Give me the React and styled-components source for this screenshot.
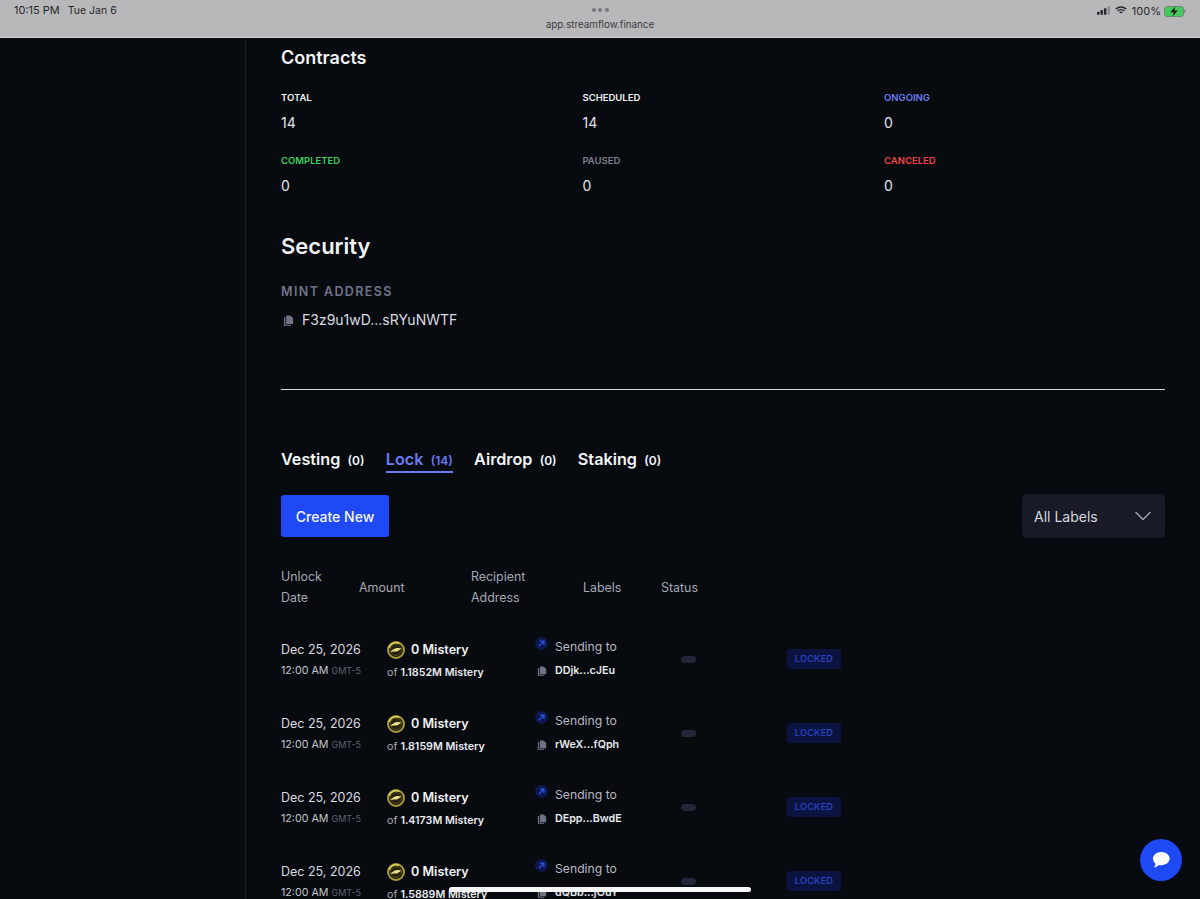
import React from 'react';
import styled, { createGlobalStyle } from 'styled-components';
import { ChevronDown } from 'lucide-react';

const STATS = [
  { label: 'Total', value: 14, color: '#f2f3f5' },
  { label: 'Scheduled', value: 14, color: '#f2f3f5' },
  { label: 'Ongoing', value: 0, color: '#6b7cf0' },
  { label: 'Completed', value: 0, color: '#3fd15f' },
  { label: 'Paused', value: 0, color: '#7d8291' },
  { label: 'Canceled', value: 0, color: '#ef4444' },
];

const TABS = [
  { name: 'Vesting', count: 0 },
  { name: 'Lock', count: 14, active: true },
  { name: 'Airdrop', count: 0 },
  { name: 'Staking', count: 0 },
];

const ROWS = [
  { total: '1.1852M', address: 'DDjk...cJEu' },
  { total: '1.8159M', address: 'rWeX...fQph' },
  { total: '1.4173M', address: 'DEpp...BwdE' },
  { total: '1.5889M', address: 'dQBb...jOuY' },
];

const CopyIcon = ({ size = 11 }) => (
  <svg width={size} height={size} viewBox="0 0 12 12">
    <path d="M3.500 0.500h4.200L11 3.400v6.400H3.500z" fill="#6f7484" />
    <path d="M1 2.400h1.600v8.200h6v1H1z" fill="#6f7484" />
  </svg>
);

const Coin = () => (
  <svg width="18" height="18" viewBox="0 0 18 18">
    <circle cx="9" cy="9" r="8" fill="#1b1a0c" stroke="#a99b37" strokeWidth="2" />
    <path d="M2.200 7a7 7 0 0 1 10-4.400" fill="none" stroke="#e3d55c" strokeWidth="1.400" />
    <circle cx="9" cy="9" r="5.600" fill="#26240f" stroke="#5c5622" strokeWidth="0.800" />
    <path d="M3.500 11C5 9 7 7.400 10 7c1.500-.2 3 0 4.500.5-1.500 1-2.500 2-4 2.800-1.500.5-3 0-4 .2s-2 .7-3 .5z" fill="#e9dd8a" />
  </svg>
);

const ArrowBadge = () => (
  <Badge>
    <svg width="7" height="7" viewBox="0 0 8 8" fill="none" stroke="#2f56f5" strokeWidth="1.400">
      <path d="M1 7L6.500 1.500M2.400 1.200h4.400v4.400" />
    </svg>
  </Badge>
);

const StatusIcons = () => (
  <Indicators>
    <svg width="13" height="9" viewBox="0 0 15 10" fill="#26272b">
      <rect x="0" y="6.500" width="2.800" height="3.500" rx="0.600" />
      <rect x="4" y="4.500" width="2.800" height="5.500" rx="0.600" />
      <rect x="8" y="2.300" width="2.800" height="7.700" rx="0.600" />
      <rect x="12" y="0" width="2.800" height="10" rx="0.600" opacity="0.300" />
    </svg>
    <svg width="12" height="9" viewBox="0 0 14 10" fill="none" stroke="#26272b" strokeWidth="1.700">
      <path d="M1 3.400a8.600 8.600 0 0 1 12 0" />
      <path d="M3.200 5.600a5.400 5.400 0 0 1 7.600 0" />
      <path d="M5.400 7.700a2.400 2.400 0 0 1 3.200 0" />
    </svg>
    <Percent>100%</Percent>
    <svg width="22" height="11" viewBox="0 0 22 11">
      <rect x="0.500" y="0.500" width="19" height="10" rx="2.600" fill="#43c95c" stroke="#6f8a72" />
      <rect x="20.300" y="3.600" width="1.200" height="3.600" rx="0.600" fill="#77807a" />
      <path d="M11.300 0.600L6.300 6.200h3.400l-1.200 4.200 5.200-5.800h-3.400z" fill="#1a1c1b" />
    </svg>
  </Indicators>
);

const App = () => (
  <Page>
    <GlobalStyle />

    <StatusBar>
      <Clock>
        <span>10:15 PM</span>
        <DayText>Tue Jan 6</DayText>
      </Clock>
      <UrlBlock>
        <Dots>
          <i />
          <i />
          <i />
        </Dots>
        <Url>app.streamflow.finance</Url>
      </UrlBlock>
      <StatusIcons />
    </StatusBar>

    <Layout>
      <Sidebar />

      <Main>
        <ContractsTitle>Contracts</ContractsTitle>
        <StatsGrid>
          {STATS.map((stat) => (
            <div key={stat.label}>
              <StatLabel $color={stat.color}>{stat.label}</StatLabel>
              <StatValue>{stat.value}</StatValue>
            </div>
          ))}
        </StatsGrid>

        <SecurityTitle>Security</SecurityTitle>
        <MintLabel>Mint Address</MintLabel>
        <MintRow>
          <CopyIcon />
          <span>F3z9u1wD...sRYuNWTF</span>
        </MintRow>

        <Divider />

        <Tabs>
          {TABS.map((tab) => (
            <Tab key={tab.name} $active={tab.active}>
              {tab.name}
              <TabCount>({tab.count})</TabCount>
            </Tab>
          ))}
        </Tabs>

        <Toolbar>
          <CreateButton>Create New</CreateButton>
          <LabelSelect>
            All Labels
            <ChevronDown size={28} strokeWidth={1.300} color="#9ba0ad" />
          </LabelSelect>
        </Toolbar>

        <HeaderRow>
          <span>Unlock<br />Date</span>
          <span>Amount</span>
          <span>Recipient<br />Address</span>
          <span>Labels</span>
          <span>Status</span>
        </HeaderRow>

        <RowList>
          {ROWS.map((row) => (
            <Row key={row.address}>
              <DateCell>
                <DateLine>Dec 25, 2026</DateLine>
                <TimeLine>12:00 AM <small>GMT-5</small></TimeLine>
              </DateCell>
              <AmountCell>
                <AmountLine><Coin />0 Mistery</AmountLine>
                <OfLine>of <b>{row.total} Mistery</b></OfLine>
              </AmountCell>
              <RecipientCell>
                <SendingLine><ArrowBadge />Sending to</SendingLine>
                <AddressLine><CopyIcon size={10} /><b>{row.address}</b></AddressLine>
              </RecipientCell>
              <div><LabelPill /></div>
              <LockedTag>Locked</LockedTag>
            </Row>
          ))}
        </RowList>
      </Main>
    </Layout>

    <ChatButton>
      <svg width="20" height="18" viewBox="0 0 20 18">
        <path d="M10.400 1C15 1 18.600 3.900 18.600 7.600s-3.600 6.600-8.200 6.600c-.9 0-1.800-.1-2.600-.3-1.200 1.300-3 2.300-5 2.500 1-1 1.600-2.200 1.700-3.700C2.900 11.500 2 9.700 2 7.600 2 3.900 5.800 1 10.400 1z" fill="#fff" />
      </svg>
    </ChatButton>
    <HomeIndicator />
  </Page>
);

const GlobalStyle = createGlobalStyle`
  html, body {
    margin: 0;
    height: 100%;
    background: #070a0f;
  }
  body {
    font-family: Inter, "Liberation Sans", sans-serif;
    color: #f2f3f5;
    overflow: hidden;
  }
`;

const Page = styled.div`
  position: relative;
  width: 1200px;
  height: 899px;
  overflow: hidden;
  display: flex;
  flex-direction: column;
  background: #070a0f;
`;

const StatusBar = styled.header`
  flex: 0 0 38px;
  box-sizing: border-box;
  height: 38px;
  display: grid;
  grid-template-columns: 1fr auto 1fr;
  padding: 0 14px;
  background: #b8b8ba;
  border-bottom: 1px solid #d0d0d1;
  color: #26272b;
  font-size: 11px;
`;

const Clock = styled.div`
  display: flex;
  gap: 8px;
  padding-top: 4px;
  line-height: 13px;
`;

const DayText = styled.span`
  font-size: 10.500px;
`;

const UrlBlock = styled.div`
  display: flex;
  flex-direction: column;
  align-items: center;
  padding-top: 8px;
`;

const Dots = styled.div`
  display: flex;
  gap: 2.500px;
  i {
    width: 4px;
    height: 4px;
    border-radius: 50%;
    background: #77787c;
  }
`;

const Url = styled.div`
  margin-top: 6px;
  font-size: 9.800px;
  line-height: 14px;
  color: #3a3b3f;
`;

const Indicators = styled.div`
  display: flex;
  justify-content: flex-end;
  align-items: flex-start;
  gap: 5px;
  padding-top: 5px;
  line-height: 12px;
  font-size: 11px;
  svg { margin-top: 1px; }
`;

const Percent = styled.span`
  margin-right: -2px;
`;

const Layout = styled.div`
  flex: 1;
  display: flex;
  min-height: 0;
`;

const Sidebar = styled.aside`
  flex: 0 0 246px;
  box-sizing: border-box;
  border-right: 1px solid #1b1e25;
`;

const Main = styled.main`
  flex: 1;
  min-width: 0;
  padding: 0 35px;
`;

const ContractsTitle = styled.h2`
  margin: 8px 0 0;
  font-size: 18px;
  line-height: 23px;
  font-weight: 600;
`;

const StatsGrid = styled.div`
  display: grid;
  grid-template-columns: repeat(3, 281px);
  column-gap: 20.500px;
  row-gap: 23px;
  margin-top: 23px;
`;

const StatLabel = styled.div`
  font-size: 9.500px;
  line-height: 12px;
  font-weight: 600;
  text-transform: uppercase;
  color: ${(p) => p.$color};
`;

const StatValue = styled.div`
  margin-top: 10px;
  font-size: 14px;
  line-height: 18px;
  color: #e3e5ea;
`;

const SecurityTitle = styled.h2`
  margin: 37px 0 0;
  font-size: 22px;
  line-height: 28px;
  font-weight: 600;
`;

const MintLabel = styled.div`
  margin-top: 24px;
  font-size: 12.500px;
  line-height: 16px;
  font-weight: 600;
  letter-spacing: 1.400px;
  text-transform: uppercase;
  color: #70758a;
`;

const MintRow = styled.div`
  display: flex;
  align-items: center;
  gap: 8px;
  margin-top: 11px;
  padding-left: 2px;
  font-size: 14px;
  line-height: 18px;
  color: #d9dbe1;
`;

const Divider = styled.hr`
  margin: 60px 0 0;
  border: 0;
  height: 1px;
  background: #d6d7da;
`;

const Tabs = styled.nav`
  display: flex;
  gap: 21.300px;
  margin-top: 59px;
`;

const Tab = styled.div`
  display: flex;
  align-items: baseline;
  gap: 7.300px;
  font-size: 16.200px;
  line-height: 21px;
  font-weight: 600;
  color: ${(p) => (p.$active ? '#6b7cf0' : '#f4f5f7')};
  border-bottom: 2px solid ${(p) => (p.$active ? '#6b7cf0' : 'transparent')};
`;

const TabCount = styled.span`
  font-size: 12px;
  font-weight: 600;
`;

const Toolbar = styled.div`
  display: flex;
  justify-content: space-between;
  align-items: center;
  margin-top: 21px;
`;

const CreateButton = styled.button`
  width: 108px;
  height: 42px;
  border: 0;
  border-radius: 3px;
  background: #1f49f5;
  color: #f3f5ff;
  font: 500 14px Inter, "Liberation Sans", sans-serif;
`;

const LabelSelect = styled.div`
  box-sizing: border-box;
  width: 143px;
  height: 44px;
  display: flex;
  align-items: center;
  justify-content: space-between;
  padding: 0 8px 0 12px;
  border-radius: 5px;
  background: #181a28;
  color: #d5d7de;
  font-size: 14px;
`;

const HeaderRow = styled.div`
  display: grid;
  grid-template-columns: 78px 112px 112px 78px auto;
  align-items: center;
  margin-top: 28px;
  font-size: 12.400px;
  line-height: 21px;
  color: #a5a9b5;
`;

const RowList = styled.div`
  margin-top: 14px;
`;

const Row = styled.div`
  display: grid;
  grid-template-columns: 106px 148px 146px 106px 54px;
  align-items: center;
  height: 74px;
`;

const DateCell = styled.div`
  padding-top: 1px;
`;

const DateLine = styled.div`
  font-size: 12.500px;
  line-height: 18px;
  color: #d9dbe1;
`;

const TimeLine = styled.div`
  margin-top: 4px;
  font-size: 10.700px;
  line-height: 16px;
  color: #c3c6ce;
  small {
    font-size: 9px;
    color: #5d6270;
  }
`;

const AmountCell = styled.div`
  padding-top: 4px;
`;

const AmountLine = styled.div`
  display: flex;
  align-items: center;
  gap: 6px;
  font-size: 12.600px;
  line-height: 18px;
  font-weight: 600;
`;

const OfLine = styled.div`
  margin-top: 6px;
  font-size: 10.700px;
  line-height: 16px;
  color: #a5a9b5;
  b {
    font-weight: 600;
    color: #e8eaee;
  }
`;

const RecipientCell = styled.div`
  padding-bottom: 2px;
`;

const SendingLine = styled.div`
  display: flex;
  align-items: center;
  gap: 7px;
  font-size: 12.200px;
  line-height: 18px;
  color: #b6b9c3;
`;

const Badge = styled.span`
  display: flex;
  align-items: center;
  justify-content: center;
  width: 13px;
  height: 13px;
  margin-top: -7px;
  border-radius: 50%;
  background: #0d1850;
`;

const AddressLine = styled.div`
  display: flex;
  align-items: center;
  gap: 8px;
  margin-top: 7px;
  padding-left: 2px;
  font-size: 10.700px;
  line-height: 16px;
  b {
    font-weight: 600;
    color: #e8eaee;
  }
`;

const LabelPill = styled.div`
  width: 15px;
  height: 7px;
  border-radius: 4px;
  background: #232639;
`;

const LockedTag = styled.div`
  width: 54px;
  height: 20px;
  border-radius: 3px;
  background: #0b1440;
  color: #2b45cc;
  font-size: 9.200px;
  line-height: 20px;
  font-weight: 500;
  letter-spacing: 0.200px;
  text-align: center;
  text-transform: uppercase;
`;

const ChatButton = styled.div`
  position: absolute;
  right: 18px;
  bottom: 18px;
  width: 42px;
  height: 42px;
  border-radius: 50%;
  display: flex;
  align-items: center;
  justify-content: center;
  background: #1f49f5;
`;

const HomeIndicator = styled.div`
  position: absolute;
  left: 449px;
  bottom: 7px;
  width: 302px;
  height: 5px;
  border-radius: 3px;
  background: #f7f7f7;
`;

export default App;
